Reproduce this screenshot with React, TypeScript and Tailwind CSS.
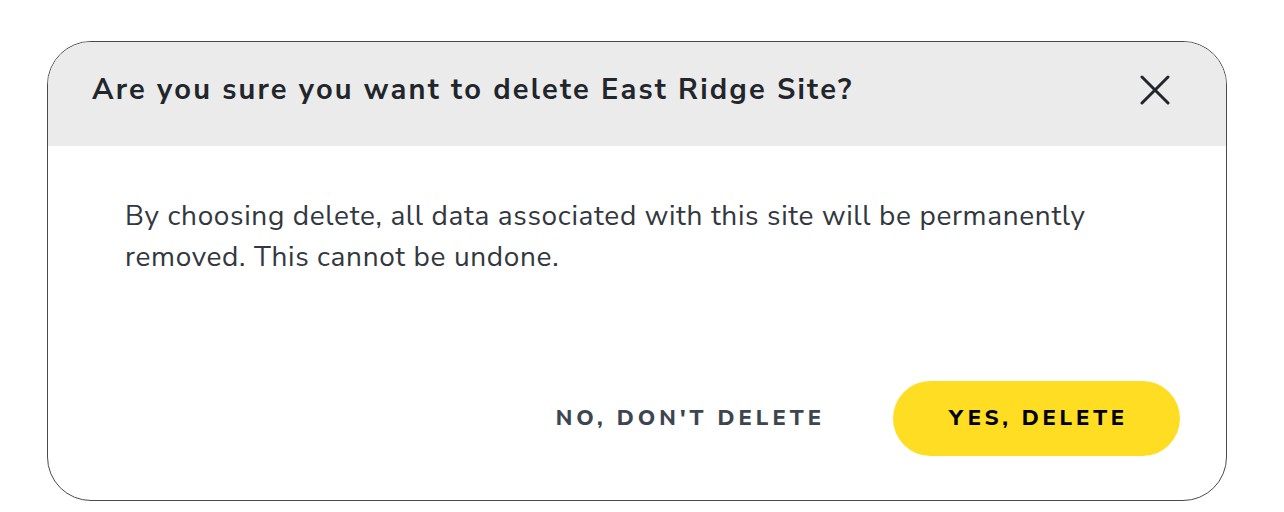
import React from "react";

export default function App() {
  return (
    <div className="w-[1284px] h-[512px] bg-white pt-[41px] pl-[47px] font-['Nunito_Sans','Lato',sans-serif]">
      <div className="w-[1180px] h-[460px] rounded-[44px] border-[1.5px] border-[#4a4a4a] overflow-hidden flex flex-col bg-white">
        {/* Header */}
        <div className="h-[104px] shrink-0 bg-[#ebebeb] flex items-center justify-between pl-[44px] pr-[56px] pb-[8px]">
          <h2 className="text-[29px] font-bold text-[#22262b] tracking-[2.2px]">
            Are you sure you want to delete East Ridge Site?
          </h2>
          <button className="text-[#22262b]">
            <svg width="30" height="30" viewBox="0 0 30 30" fill="none" stroke="currentColor" strokeWidth="3" strokeLinecap="round">
              <path d="M2 2 L28 28 M28 2 L2 28" />
            </svg>
          </button>
        </div>

        {/* Body */}
        <div className="flex-1 flex flex-col justify-between pl-[77px] pr-[46px] pt-[50px] pb-[44px]">
          <p className="text-[28px] leading-[41px] tracking-[0.65px] text-[#33383e] w-[1010px]">
            By choosing delete, all data associated with this site will be permanently removed. This cannot be undone.
          </p>
          <div className="flex items-center justify-end gap-[68px]">
            <button className="text-[22px] font-extrabold tracking-[4px] text-[#3d4550]">
              NO, DON'T DELETE
            </button>
            <button className="h-[75px] w-[287px] rounded-full bg-[#ffdd22] text-[22px] font-extrabold tracking-[3.8px] text-black pl-[4px]">
              YES, DELETE
            </button>
          </div>
        </div>
      </div>
    </div>
  );
}
